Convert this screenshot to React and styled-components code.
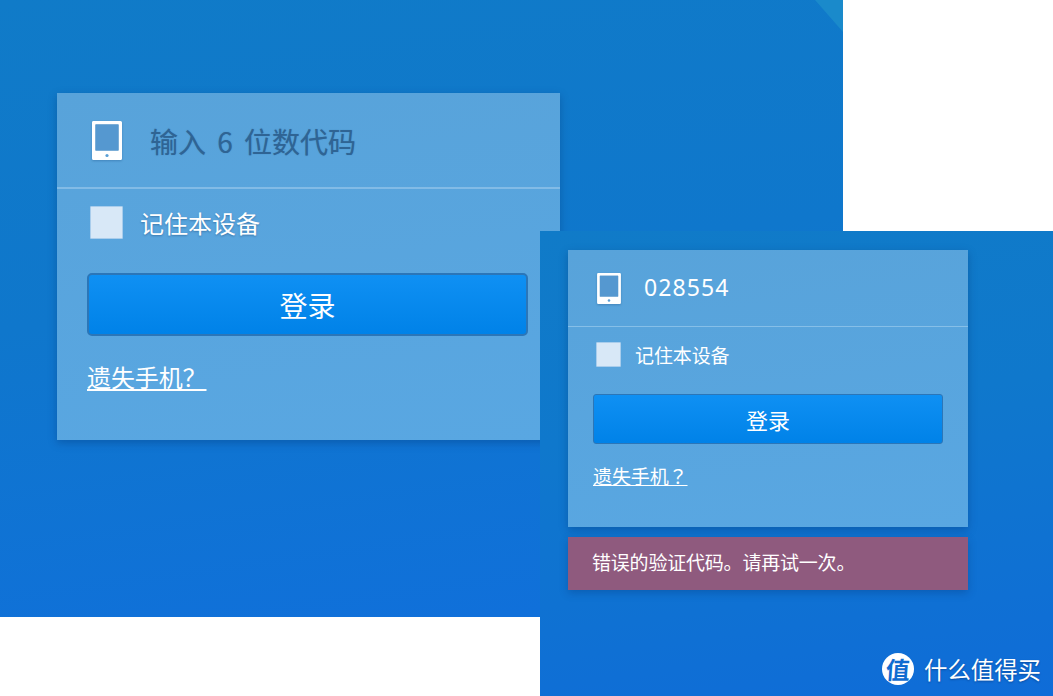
import styled, { createGlobalStyle } from "styled-components";

const GlobalStyle = createGlobalStyle`
  html, body {
    margin: 0;
    padding: 0;
    background: #fff;
  }
  body {
    font-family: "Noto Sans CJK SC", "Noto Sans", sans-serif;
  }
`;

const App = () => {
  return (
    <Page>
      <GlobalStyle />
      <LeftShot>
        <Corner />
        <Card>
          <CodeRow>
            <TabletIcon width={30} height={39} />
            <CodeText>输入 6 位数代码</CodeText>
          </CodeRow>
          <RememberRow>
            <Check />
            <RememberLabel>记住本设备</RememberLabel>
          </RememberRow>
          <LoginButton>登录</LoginButton>
          <LostLink>遗失手机？</LostLink>
        </Card>
      </LeftShot>

      <RightShot>
        <SmallCard>
          <SmallCodeRow>
            <TabletIcon width={24} height={31} />
            <SmallCode>028554</SmallCode>
          </SmallCodeRow>
          <SmallRememberRow>
            <SmallCheck />
            <SmallLabel>记住本设备</SmallLabel>
          </SmallRememberRow>
          <SmallButton>登录</SmallButton>
          <SmallLink>遗失手机？</SmallLink>
        </SmallCard>
        <ErrorBar>错误的验证代码。请再试一次。</ErrorBar>
        <Watermark>
          <Badge>
            <BadgeGlyph>值</BadgeGlyph>
          </Badge>
          <BrandName>什么值得买</BrandName>
        </Watermark>
      </RightShot>
    </Page>
  );
};

const TabletIcon = ({ width, height }) => (
  <TabletSvg width={width} height={height} viewBox="0 0 30 39">
    <path
      fill="#fff"
      fillRule="evenodd"
      d="M1.5 0h27A1.5 1.5 0 0 1 30 1.5v36a1.5 1.5 0 0 1-1.5 1.5h-27A1.5 1.5 0 0 1 0 37.5v-36A1.5 1.5 0 0 1 1.5 0zM3.5 3.5v26h23v-26z"
    />
    <path fill="#5598d0" d="M3.5 3.5h23v26h-23z" />
    <circle cx="15" cy="34.5" r="1.6" fill="#5a9fd6" />
  </TabletSvg>
);

const TabletSvg = styled.svg`
  display: block;
  flex: none;
  filter: drop-shadow(0 1px 1px rgba(0, 40, 90, 0.25));
`;

const Page = styled.div`
  position: relative;
  width: 1053px;
  height: 696px;
  overflow: hidden;
  background: #fff;
`;

const LeftShot = styled.section`
  position: absolute;
  left: 0;
  top: 0;
  width: 843px;
  height: 617px;
  box-sizing: border-box;
  padding: 93px 0 0 57px;
  overflow: hidden;
  background: linear-gradient(172deg, #107bc8 0%, #0f77cc 45%, #106fdc 100%);
`;

const Corner = styled.div`
  position: absolute;
  right: 0;
  top: 0;
  width: 28px;
  height: 32px;
  background: #1a8acb;
  clip-path: polygon(0 0, 100% 0, 100% 100%);
`;

const Card = styled.div`
  width: 503px;
  height: 347px;
  background: linear-gradient(172deg, #58a3da 0%, #59a7e2 100%);
  box-shadow: 0 3px 8px rgba(0, 50, 110, 0.35);
`;

const CodeRow = styled.div`
  display: flex;
  align-items: center;
  height: 96px;
  box-sizing: border-box;
  padding: 1px 0 0 35px;
  border-bottom: 2px solid #82bbe6;
`;

const CodeText = styled.span`
  margin-left: 28px;
  font-size: 28px;
  word-spacing: 5px;
  color: #2f6494;
  white-space: pre;
  text-shadow: 0 0 1px rgba(47, 100, 148, 0.6);
`;

const RememberRow = styled.div`
  display: flex;
  align-items: center;
  margin: 16px 0 0 33px;
  height: 34px;
`;

const Check = styled.span`
  width: 33px;
  height: 33px;
  background: #d8e8f7;
  border: 1px solid #a9cdec;
  box-sizing: border-box;
  border-radius: 1px;
`;

const RememberLabel = styled.span`
  margin-left: 17px;
  font-size: 24px;
  color: #fff;
  text-shadow: 0 1px 2px rgba(0, 40, 90, 0.35);
`;

const LoginButton = styled.button`
  display: block;
  box-sizing: border-box;
  width: 441px;
  height: 63px;
  margin: 34px 0 0 30px;
  padding: 0;
  font: inherit;
  font-size: 28px;
  color: #fff;
  border: 2px solid #2b76b8;
  border-radius: 5px;
  background: linear-gradient(180deg, #0f90f3, #0082e8);
`;

const LostLink = styled.a`
  display: inline-block;
  margin: 24px 0 0 30px;
  font-size: 24px;
  line-height: 34px;
  letter-spacing: -0.1px;
  color: #fff;
  text-decoration: underline;
`;

const RightShot = styled.section`
  position: absolute;
  left: 540px;
  top: 231px;
  width: 513px;
  height: 465px;
  box-sizing: border-box;
  padding: 19px 0 0 28px;
  overflow: hidden;
  background: linear-gradient(172deg, #107bc8 0%, #0f78cc 40%, #0f6cd8 100%);
`;

const SmallCard = styled.div`
  width: 400px;
  height: 277px;
  background: linear-gradient(172deg, #58a3da 0%, #59a7e2 100%);
  box-shadow: 0 3px 8px rgba(0, 50, 110, 0.35);
`;

const SmallCodeRow = styled.div`
  display: flex;
  align-items: center;
  height: 77px;
  box-sizing: border-box;
  padding-left: 29px;
  border-bottom: 1px solid #86bfe8;
`;

const SmallCode = styled.span`
  margin-left: 23px;
  font-family: "Noto Sans", sans-serif;
  font-size: 23px;
  letter-spacing: 1.1px;
  line-height: 24px;
  margin-top: -2px;
  color: #fff;
`;

const SmallRememberRow = styled.div`
  display: flex;
  align-items: center;
  margin: 14px 0 0 28px;
  height: 26px;
`;

const SmallCheck = styled(Check)`
  width: 25px;
  height: 25px;
`;

const SmallLabel = styled.span`
  margin-left: 14px;
  font-size: 19px;
  color: #fff;
  letter-spacing: -0.1px;
`;

const SmallButton = styled.button`
  display: block;
  box-sizing: border-box;
  width: 350px;
  height: 50px;
  margin: 27px 0 0 25px;
  padding: 0;
  font: inherit;
  font-size: 22px;
  color: #fff;
  border: 1px solid #2b76b8;
  border-radius: 3px;
  background: linear-gradient(180deg, #0f90f3, #0082e8);
`;

const SmallLink = styled.a`
  display: inline-block;
  margin: 19px 0 0 25px;
  font-family: "Noto Sans CJK TC", sans-serif;
  font-size: 19px;
  line-height: 26px;
  letter-spacing: -0.1px;
  color: #fff;
  text-decoration: underline;
`;

const ErrorBar = styled.div`
  width: 400px;
  height: 53px;
  box-sizing: border-box;
  margin-top: 10px;
  padding-left: 24px;
  font-size: 19px;
  letter-spacing: -0.2px;
  line-height: 50px;
  color: #fff;
  background: #8f5a7e;
  box-shadow: 0 3px 8px rgba(0, 50, 110, 0.3);
`;

const Watermark = styled.div`
  position: absolute;
  right: 12px;
  bottom: 10px;
  display: flex;
  align-items: center;
  gap: 10px;
`;

const Badge = styled.span`
  display: flex;
  align-items: center;
  justify-content: center;
  width: 32px;
  height: 32px;
  border-radius: 50%;
  background: #fff;
`;

const BadgeGlyph = styled.span`
  color: #0f6cd0;
  font-size: 24px;
  line-height: 32px;
  font-weight: 700;
  transform: skewX(-4deg);
`;

const BrandName = styled.span`
  font-size: 23.4px;
  color: #fff;
  text-shadow: 0 1px 2px rgba(0, 30, 80, 0.4);
`;

export default App;
